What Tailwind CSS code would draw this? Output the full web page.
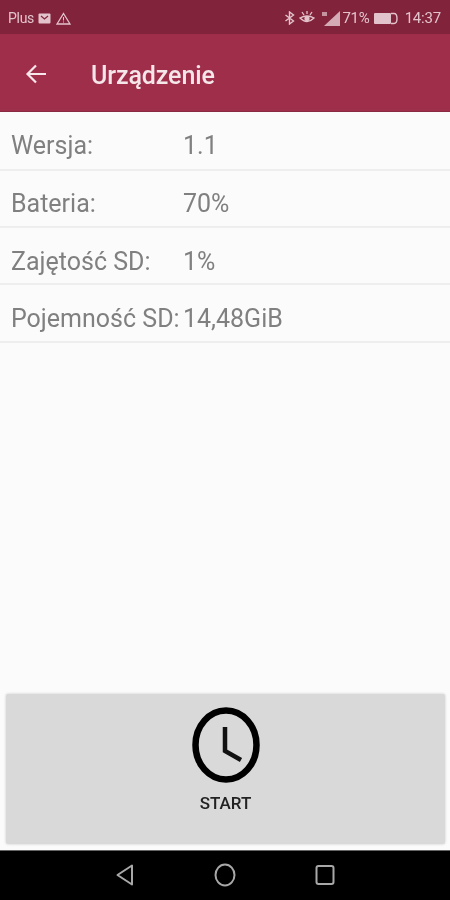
<!DOCTYPE html>
<html><head><meta charset="utf-8"><script src="https://cdn.jsdelivr.net/npm/@tailwindcss/browser@4"></script></head>
<body class="m-0">
<div class="w-[450px] h-[900px] flex flex-col bg-[#fbfbfb] overflow-hidden font-['Roboto',sans-serif] blur-[0.7px]">
  <div class="h-[34px] bg-[#80233b] flex items-center justify-between pl-[8px] pr-[9px] pt-[2px] text-[#e3c3cb] text-[14px] shrink-0">
    <div class="flex items-center gap-[3px]">
      <span class="tracking-[-0.3px]">Plus</span>
      <svg width="13" height="11" viewBox="0 0 13 11" class="ml-[1px]"><rect x="0.5" y="0.5" width="12" height="10" rx="1" fill="#e3c3cb"/><path d="M3 3l3.5 3L10 3" stroke="#80233b" fill="none" stroke-width="1.2"/></svg>
      <svg width="15" height="13" viewBox="0 0 15 13" class="ml-[2px]"><path d="M7.5 1.5L14 12H1Z" fill="none" stroke="#e3c3cb" stroke-width="1.3"/><path d="M7.5 5v3.5M7.5 9.5v1" stroke="#e3c3cb"/></svg>
    </div>
    <div class="flex items-center">
      <svg width="11" height="14" viewBox="0 0 11 14"><path d="M1.5 4l8 6-4 3V1l4 3-8 6" fill="none" stroke="#e3c3cb" stroke-width="1.4"/></svg>
      <svg width="18" height="14" viewBox="0 0 18 14" class="ml-[3px]"><path d="M2 7q7 7 14 0q-7-4-14 0Z" fill="none" stroke="#e3c3cb" stroke-width="1.4"/><circle cx="9" cy="7.5" r="2.6" fill="#e3c3cb"/><path d="M4 1l2 3M14 1l-2 3M9 0v3" stroke="#e3c3cb" stroke-width="1.3"/></svg>
      <svg width="20" height="15" viewBox="0 0 20 15" class="ml-[5px]"><path d="M19 0v15H3Z" fill="#e3c3cb" opacity=".85"/><path d="M1 1h5v4H1z" fill="#e3c3cb" opacity=".7"/></svg>
      <span class="ml-[1px] tracking-[-0.2px] text-[15px]">71%</span>
      <svg width="26" height="13" viewBox="0 0 26 13" class="ml-[4px]"><rect x="0" y="1" width="17" height="11" rx="1" fill="#e3c3cb"/><path d="M17 1.5h3q3 0 3 5t-3 5h-3" fill="none" stroke="#e3c3cb" stroke-width="1.4"/></svg>
      <span class="ml-[5px] text-[15px] tracking-[-0.2px]">14:37</span>
    </div>
  </div>
  <div class="h-[78px] bg-[#9f2e4b] flex items-center shrink-0 border-b border-[#8a2a42]">
    <svg width="24" height="24" viewBox="0 0 24 24" class="ml-[24px] mt-[2px]"><path d="M22 12H3.5M12 3.5L3.5 12l8.5 8.5" fill="none" stroke="#f7e6ea" stroke-width="2.2"/></svg>
    <span class="ml-[43px] pt-[7px] text-[25px] font-medium text-[#f5e6ea] tracking-[-0.1px]">Urządzenie</span>
  </div>
  <div class="text-[25px] text-[#808080] leading-[30px]">
    <div class="h-[59px] pt-[11px] flex items-center border-b-2 border-[#eeeeee] pl-[11px]"><span class="w-[172px]">Wersja:</span><span>1.1</span></div>
    <div class="h-[57px] pt-[11px] flex items-center border-b-2 border-[#eeeeee] pl-[11px]"><span class="w-[172px]">Bateria:</span><span>70%</span></div>
    <div class="h-[57px] pt-[13px] flex items-center border-b-2 border-[#eeeeee] pl-[11px]"><span class="w-[172px]">Zajętość SD:</span><span>1%</span></div>
    <div class="h-[58px] pt-[12px] flex items-center border-b-2 border-[#eeeeee] pl-[11px]"><span class="w-[172px] whitespace-nowrap">Pojemność SD:</span><span>14,48GiB</span></div>
  </div>
  <div class="flex-1 flex flex-col justify-end pl-[6px] pr-[5px] pb-[6px]">
    <div class="h-[150px] bg-[#d9d9d9] rounded-[2px] shadow-[0_0_3px_rgba(0,0,0,0.2)] flex flex-col items-center pt-[13px]">
      <svg width="68" height="76" viewBox="0 0 68 76"><ellipse cx="34" cy="38" rx="30.5" ry="34.5" fill="none" stroke="#000" stroke-width="6.5"/><path d="M33 20v24l16 9" fill="none" stroke="#111" stroke-width="4.5"/></svg>
      <span class="mt-[10px] text-[17px] font-medium text-[#222] leading-[20px]">START</span>
    </div>
  </div>
  <div class="h-[50px] bg-black flex items-center shrink-0 border-t border-[#666] relative">
    <div class="flex items-center w-full pl-[115px] pr-[115px] justify-between -mt-[2px]">
      <svg width="20" height="24" viewBox="0 0 20 24"><path d="M17 2.5v19L2.5 12Z" fill="none" stroke="#a8a8a8" stroke-width="2" stroke-linejoin="round"/></svg>
      <svg width="22" height="24" viewBox="0 0 22 24"><ellipse cx="11" cy="12" rx="9.5" ry="10.5" fill="none" stroke="#a8a8a8" stroke-width="2"/></svg>
      <svg width="20" height="22" viewBox="0 0 20 22"><rect x="1.5" y="2" width="17" height="18" rx="2" fill="none" stroke="#a8a8a8" stroke-width="2"/></svg>
    </div>
  </div>
</div>
</body></html>
